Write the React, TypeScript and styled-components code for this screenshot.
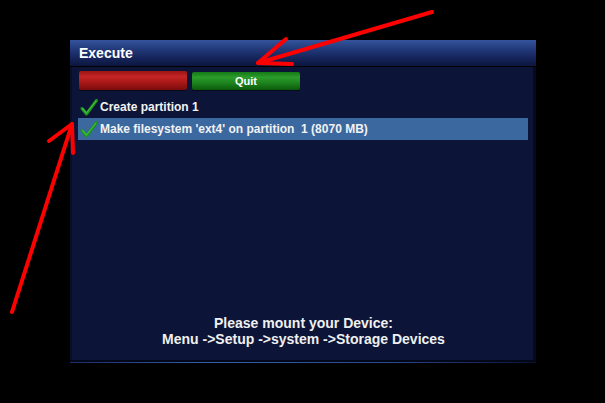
import React from 'react';
import styled, { createGlobalStyle } from 'styled-components';

const GlobalStyle = createGlobalStyle`
	html, body {
		margin: 0;
		padding: 0;
		background: #000;
	}
	body {
		font-family: 'Liberation Sans', Arial, sans-serif;
		color: #fff;
	}
`;

interface Step {
	label: string;
	selected?: boolean;
}

const steps: Step[] = [
	{ label: 'Create partition 1' },
	{ label: "Make filesystem 'ext4' on partition\u00a0 1 (8070 MB)", selected: true },
];

const CheckIcon = () => (
	<svg width="18" height="17" viewBox="0 0 18 17">
		<path d="M2 9.5 L6.5 15 L16.5 1.5" fill="none" stroke="#1f8f1f" strokeWidth="3" strokeLinecap="round" strokeLinejoin="round" />
		<path d="M2.5 9.5 L6.5 14 L16 2" fill="none" stroke="#3cc23c" strokeWidth="1.2" strokeLinecap="round" strokeLinejoin="round" />
	</svg>
);

const Annotations = () => (
	<Overlay width="605" height="403" viewBox="0 0 605 403">
		<g fill="none" stroke="#ff0000" strokeWidth="4" strokeLinecap="round" strokeLinejoin="round">
			<path d="M432 12 L258 63" />
			<path d="M286 39 L258 63 L292 64" />
			<path d="M12 312 L72 124" />
			<path d="M49 141 L72 124 L73 153" />
		</g>
	</Overlay>
);

const App = () => {
	return (
		<Page>
			<GlobalStyle />
			<Window>
				<TitleBar>Execute</TitleBar>
				<Body>
					<ButtonRow>
						<ColorButton $color="red" />
						<ColorButton $color="green">Quit</ColorButton>
					</ButtonRow>
					<StepList>
						{steps.map((step) => (
							<StepRow key={step.label} $selected={step.selected}>
								<CheckIcon />
								<StepLabel>{step.label}</StepLabel>
							</StepRow>
						))}
					</StepList>
					<Footer>
						Please mount your Device:
						<br />
						Menu -&gt;Setup -&gt;system -&gt;Storage Devices
					</Footer>
				</Body>
				<BottomEdge />
			</Window>
			<Annotations />
		</Page>
	);
};

export default App;

const Page = styled.div`
	position: relative;
	width: 605px;
	height: 403px;
	background: #000;
	overflow: hidden;
	padding-top: 40px;
	box-sizing: border-box;
`;

const Window = styled.div`
	margin-left: 70px;
	width: 466px;
	display: flex;
	flex-direction: column;
`;

const TitleBar = styled.div`
	height: 27px;
	padding-left: 9px;
	padding-bottom: 1px;
	box-sizing: border-box;
	display: flex;
	align-items: center;
	font-size: 14px;
	font-weight: bold;
	background: linear-gradient(to bottom, #34549c 0%, #223a7a 35%, #15245a 70%, #0c163e 100%);
	border-bottom: 1px solid #000;
`;

const Body = styled.div`
	height: 293px;
	display: flex;
	flex-direction: column;
	background: #0c1538;
	border-left: 2px solid #081029;
	border-right: 3px solid #050a1e;
	padding: 4px 5px 13px 7px;
	box-sizing: border-box;
`;

const ButtonRow = styled.div`
	display: flex;
	gap: 5px;
	align-items: flex-start;
`;

const ColorButton = styled.div<{ $color: 'red' | 'green' }>`
	width: 108px;
	border-radius: 2px;
	display: flex;
	align-items: center;
	justify-content: center;
	font-size: 11px;
	font-weight: bold;
	margin-top: ${({ $color }) => ($color === 'green' ? '1px' : '0')};
	height: ${({ $color }) => ($color === 'green' ? '18px' : '19px')};
	background: ${({ $color }) =>
		$color === 'red'
			? 'linear-gradient(to bottom, #9c1414 0%, #c42424 30%, #a81818 60%, #7a0c0c 100%)'
			: 'linear-gradient(to bottom, #157a15 0%, #2c9c2c 30%, #1c841c 60%, #0c5a0c 100%)'};
	box-shadow: 0 1px 0 #050a1e;
`;

const StepList = styled.div`
	display: flex;
	flex-direction: column;
	margin-top: 6px;
	margin-left: -1px;
`;

const StepRow = styled.div<{ $selected?: boolean }>`
	height: 22px;
	display: flex;
	align-items: center;
	gap: 2px;
	padding-left: 2px;
	background: ${({ $selected }) => ($selected ? '#3c68a0' : 'transparent')};
`;

const StepLabel = styled.span`
	font-size: 12px;
	font-weight: bold;
	white-space: pre;
	color: #f2f2f2;
`;

const Footer = styled.div`
	margin-top: auto;
	text-align: center;
	font-size: 14px;
	font-weight: bold;
	line-height: 16px;
	color: #f0f0f0;
`;

const BottomEdge = styled.div`
	height: 2px;
	background: #030818;
	border-bottom: 1px solid transparent;
	border-image: linear-gradient(to right, #1a2c6a, #3a5cb0 30%, #2a4490 70%, #0a1230) 1;
`;

const Overlay = styled.svg`
	position: absolute;
	top: 0;
	left: 0;
	pointer-events: none;
`;
